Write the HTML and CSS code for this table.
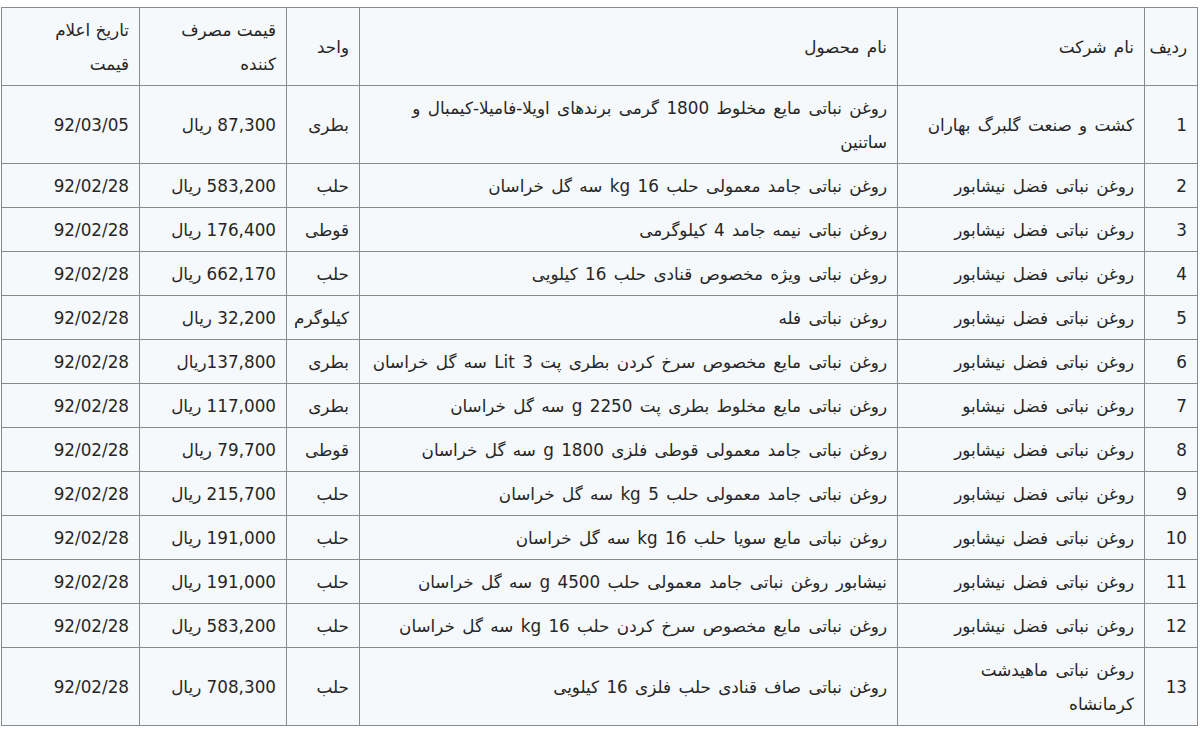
FILE: index.html
```html
<!DOCTYPE html>
<html lang="fa" dir="rtl">
<head>
<meta charset="utf-8">
<title>قیمت روغن نباتی</title>
<link rel="stylesheet" href="styles.css">
</head>
<body>
<table class="prices">
  <colgroup>
    <col class="c-row">
    <col class="c-company">
    <col class="c-product">
    <col class="c-unit">
    <col class="c-price">
    <col class="c-date">
  </colgroup>
  <thead>
    <tr>
      <th>ردیف</th>
      <th class="txt">نام شرکت</th>
      <th class="txt">نام محصول</th>
      <th>واحد</th>
      <th>قیمت مصرف<br>کننده</th>
      <th>تاریخ اعلام<br>قیمت</th>
    </tr>
  </thead>
  <tbody>
    <tr><td>1</td><td class="txt">کشت و صنعت گلبرگ بهاران</td><td class="txt">روغن نباتی مایع مخلوط 1800 گرمی برندهای اویلا-فامیلا-کیمبال و<br>ساتنین</td><td>بطری</td><td>87,300 ریال</td><td>92/03/05</td></tr>
    <tr><td>2</td><td class="txt">روغن نباتی فضل نیشابور</td><td class="txt">روغن نباتی جامد معمولی حلب 16 kg سه گل خراسان</td><td>حلب</td><td>583,200 ریال</td><td>92/02/28</td></tr>
    <tr><td>3</td><td class="txt">روغن نباتی فضل نیشابور</td><td class="txt">روغن نباتی نیمه جامد 4 کیلوگرمی</td><td>قوطی</td><td>176,400 ریال</td><td>92/02/28</td></tr>
    <tr><td>4</td><td class="txt">روغن نباتی فضل نیشابور</td><td class="txt">روغن نباتی ویژه مخصوص قنادی حلب 16 کیلویی</td><td>حلب</td><td>662,170 ریال</td><td>92/02/28</td></tr>
    <tr><td>5</td><td class="txt">روغن نباتی فضل نیشابور</td><td class="txt">روغن نباتی فله</td><td>کیلوگرم</td><td>32,200 ریال</td><td>92/02/28</td></tr>
    <tr><td>6</td><td class="txt">روغن نباتی فضل نیشابور</td><td class="txt">روغن نباتی مایع مخصوص سرخ کردن بطری پت 3 Lit سه گل خراسان</td><td>بطری</td><td>137,800ریال</td><td>92/02/28</td></tr>
    <tr><td>7</td><td class="txt">روغن نباتی فضل نیشابو</td><td class="txt">روغن نباتی مایع مخلوط بطری پت 2250 g سه گل خراسان</td><td>بطری</td><td>117,000 ریال</td><td>92/02/28</td></tr>
    <tr><td>8</td><td class="txt">روغن نباتی فضل نیشابور</td><td class="txt">روغن نباتی جامد معمولی قوطی فلزی 1800 g سه گل خراسان</td><td>قوطی</td><td>79,700 ریال</td><td>92/02/28</td></tr>
    <tr><td>9</td><td class="txt">روغن نباتی فضل نیشابور</td><td class="txt">روغن نباتی جامد معمولی حلب 5 kg سه گل خراسان</td><td>حلب</td><td>215,700 ریال</td><td>92/02/28</td></tr>
    <tr><td>10</td><td class="txt">روغن نباتی فضل نیشابور</td><td class="txt">روغن نباتی مایع سویا حلب 16 kg سه گل خراسان</td><td>حلب</td><td>191,000 ریال</td><td>92/02/28</td></tr>
    <tr><td>11</td><td class="txt">روغن نباتی فضل نیشابور</td><td class="txt">نیشابور روغن نباتی جامد معمولی حلب 4500 g سه گل خراسان</td><td>حلب</td><td>191,000 ریال</td><td>92/02/28</td></tr>
    <tr><td>12</td><td class="txt">روغن نباتی فضل نیشابور</td><td class="txt">روغن نباتی مایع مخصوص سرخ کردن حلب 16 kg سه گل خراسان</td><td>حلب</td><td>583,200 ریال</td><td>92/02/28</td></tr>
    <tr><td>13</td><td class="txt">روغن نباتی ماهیدشت<br>کرمانشاه</td><td class="txt">روغن نباتی صاف قنادی حلب فلزی 16 کیلویی</td><td>حلب</td><td>708,300 ریال</td><td>92/02/28</td></tr>
  </tbody>
</table>
</body>
</html>
```

FILE: styles.css
```css
html, body {
  margin: 0;
  padding: 0;
  background: #ffffff;
}

body {
  padding: 7px 2px 0 2px;
  font-family: "DejaVu Sans", Tahoma, sans-serif;
  font-size: 16.8px;
  color: #262626;
}

.prices {
  width: 1196px;
  table-layout: fixed;
  border-collapse: collapse;
  background: #f6f9fb;
  border: 1px solid #8a8a8a;
}

.c-row { width: 53px; }
.c-company { width: 247px; }
.c-product { width: 538px; }
.c-unit { width: 73px; }
.c-price { width: 147px; }
.c-date { width: 138px; }

.prices th,
.prices td {
  border: 1px solid #8a8a8a;
  padding: 4.5px 10px;
  line-height: 34px;
  text-align: right;
  vertical-align: middle;
  font-weight: normal;
  white-space: nowrap;
}

.prices .txt {
  word-spacing: 2px;
}
```
